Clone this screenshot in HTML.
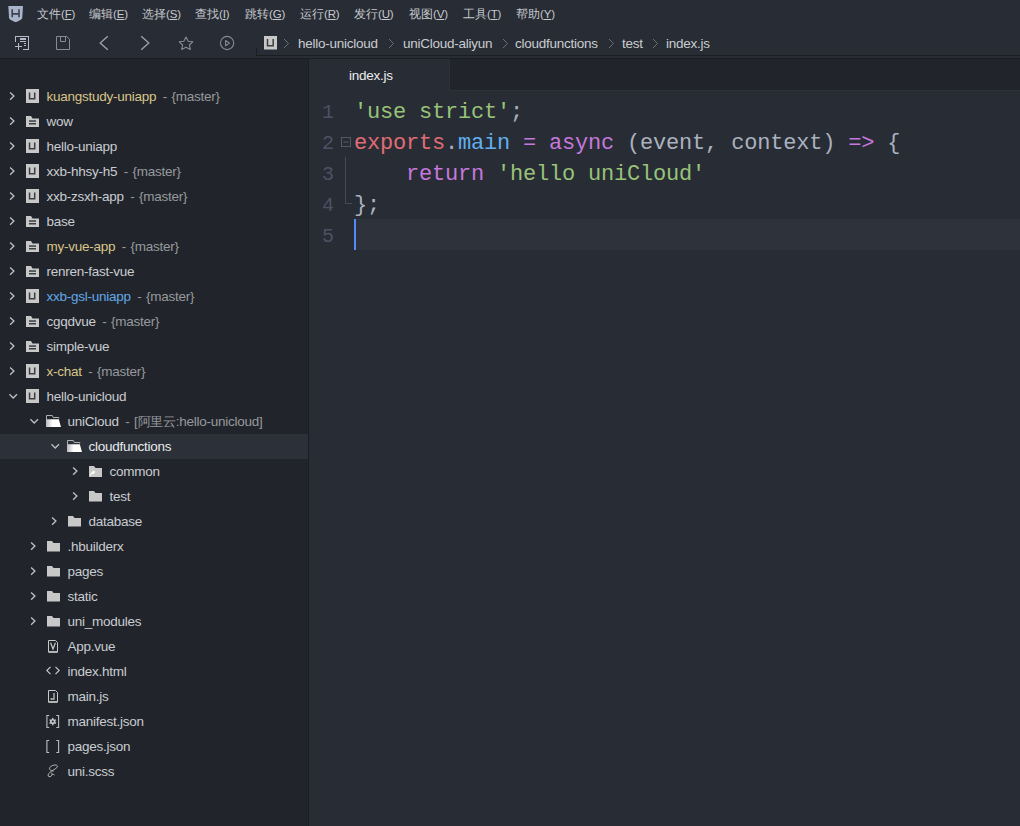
<!DOCTYPE html><html><head><meta charset="utf-8"><style>
*{margin:0;padding:0;box-sizing:border-box}
html,body{width:1020px;height:826px;overflow:hidden;background:#282c34;font-family:"Liberation Sans",sans-serif}
.abs{position:absolute}
.m{position:absolute;top:5px;font-size:12px;color:#c5c8ce;white-space:nowrap;line-height:18px}
.m u{text-decoration:underline;text-underline-offset:1px}
.t{position:absolute;font-size:13.5px;letter-spacing:-0.25px;line-height:16px;color:#c9ccd1;white-space:nowrap}
.g{color:#97999d}
.bc{position:absolute;top:36px;font-size:13.5px;letter-spacing:-0.25px;line-height:16px;color:#c9ccd1;white-space:nowrap}
.code{position:absolute;left:354px;font-family:"Liberation Mono",monospace;font-size:22px;letter-spacing:-0.2px;line-height:31px;white-space:pre;color:#abb2bf}
.ln{position:absolute;left:322px;font-family:"Liberation Mono",monospace;font-size:20px;line-height:31px;color:#4b5263}

</style></head><body>
<div class="abs" style="left:0;top:0;width:1020px;height:28px;background:#282c34"></div>
<svg class="abs" style="left:0;top:0" width="30" height="28" viewBox="0 0 30 28"><path d="M8.3 5.9 H23 L22.3 17.6 Q22.2 19 20.9 19.7 L16.5 21.9 Q15.65 22.3 14.8 21.9 L10.4 19.7 Q9.1 19 9 17.6 Z" fill="#a9b4c8"/><path d="M12.2 9.3 V17.2 M19 9.3 V17.2 M12.2 13.9 H19" stroke="#3b4150" stroke-width="1.6" fill="none"/></svg>
<div class="m" style="left:37px">文件<span style="letter-spacing:-0.2px;font-size:11.5px">(<u>F</u>)</span></div>
<div class="m" style="left:89px">编辑<span style="letter-spacing:-0.2px;font-size:11.5px">(<u>E</u>)</span></div>
<div class="m" style="left:142px">选择<span style="letter-spacing:-0.2px;font-size:11.5px">(<u>S</u>)</span></div>
<div class="m" style="left:195px">查找<span style="letter-spacing:-0.2px;font-size:11.5px">(<u>I</u>)</span></div>
<div class="m" style="left:245px">跳转<span style="letter-spacing:-0.2px;font-size:11.5px">(<u>G</u>)</span></div>
<div class="m" style="left:300px">运行<span style="letter-spacing:-0.2px;font-size:11.5px">(<u>R</u>)</span></div>
<div class="m" style="left:354px">发行<span style="letter-spacing:-0.2px;font-size:11.5px">(<u>U</u>)</span></div>
<div class="m" style="left:409px">视图<span style="letter-spacing:-0.2px;font-size:11.5px">(<u>V</u>)</span></div>
<div class="m" style="left:463px">工具<span style="letter-spacing:-0.2px;font-size:11.5px">(<u>T</u>)</span></div>
<div class="m" style="left:516px">帮助<span style="letter-spacing:-0.2px;font-size:11.5px">(<u>Y</u>)</span></div>
<div class="abs" style="left:0;top:28px;width:1020px;height:31px;background:#282c34;border-bottom:1px solid #1b1d22"></div>
<svg class="abs" style="left:0;top:28px" width="256" height="30" viewBox="0 28 256 30">
<g fill="#b4bbc8" shape-rendering="crispEdges">
<rect x="15" y="36" width="14" height="1"/><rect x="15" y="36" width="1" height="6"/><rect x="28" y="36" width="1" height="14"/><rect x="23" y="49" width="6" height="1"/>
<rect x="20" y="38" width="6" height="2"/><rect x="20" y="41" width="6" height="1"/><rect x="24" y="43" width="2" height="1"/><rect x="24" y="45" width="2" height="1"/>
<rect x="15" y="46" width="7" height="1"/><rect x="18" y="43" width="1" height="7"/>
</g>
<path d="M56.5 49.5 V36.5 H66.8 L69.5 39.2 V49.5 Z" fill="none" stroke="#868b96" stroke-width="1"/>
<path d="M60.5 36.5 V41.5 H65.5 V36.5" fill="none" stroke="#868b96" stroke-width="1"/>
<path d="M107.8 36.2 L100.2 43 L107.8 49.8" fill="none" stroke="#9ea3ae" stroke-width="1.3"/>
<path d="M141.2 36.2 L148.8 43 L141.2 49.8" fill="none" stroke="#9ea3ae" stroke-width="1.3"/>
<path d="M186 37 L188.2 41.2 L192.8 41.8 L189.4 45 L190.3 49.4 L186 47.3 L181.7 49.4 L182.6 45 L179.2 41.8 L183.8 41.2 Z" fill="none" stroke="#868b96" stroke-width="1.1" stroke-linejoin="round"/>
<circle cx="227.1" cy="43" r="6.6" fill="none" stroke="#868b96" stroke-width="1.1"/>
<path d="M225.6 40.5 V45.7 L229.5 43.1 Z" fill="none" stroke="#868b96" stroke-width="1.1" stroke-linejoin="round"/>
</svg>
<div class="abs" style="left:256px;top:48px;width:764px;height:8px;border-left:1px solid #1b1d22;border-bottom:1px solid #1b1d22"></div>
<svg class="abs" style="left:264px;top:36px" width="13" height="14" viewBox="0 0 13 14"><rect x="0" y="0" width="13" height="13.5" fill="#c8c8c8"/><path d="M3.5 3 V9.8 H9.2 V3" fill="none" stroke="#3a3d42" stroke-width="1.5"/></svg>
<svg class="abs" style="left:283px;top:38px" width="7" height="11" viewBox="0 0 7 11"><path d="M1 1 L5.5 5.5 L1 10" fill="none" stroke="#6d7077" stroke-width="1"/></svg>
<svg class="abs" style="left:388px;top:38px" width="7" height="11" viewBox="0 0 7 11"><path d="M1 1 L5.5 5.5 L1 10" fill="none" stroke="#6d7077" stroke-width="1"/></svg>
<svg class="abs" style="left:502px;top:38px" width="7" height="11" viewBox="0 0 7 11"><path d="M1 1 L5.5 5.5 L1 10" fill="none" stroke="#6d7077" stroke-width="1"/></svg>
<svg class="abs" style="left:608px;top:38px" width="7" height="11" viewBox="0 0 7 11"><path d="M1 1 L5.5 5.5 L1 10" fill="none" stroke="#6d7077" stroke-width="1"/></svg>
<svg class="abs" style="left:652px;top:38px" width="7" height="11" viewBox="0 0 7 11"><path d="M1 1 L5.5 5.5 L1 10" fill="none" stroke="#6d7077" stroke-width="1"/></svg>
<div class="bc" style="left:298px">hello-unicloud</div>
<div class="bc" style="left:403px">uniCloud-aliyun</div>
<div class="bc" style="left:515px">cloudfunctions</div>
<div class="bc" style="left:622px">test</div>
<div class="bc" style="left:666px">index.js</div>
<div class="abs" style="left:0;top:59px;width:308px;height:767px;background:#21252b"></div>
<div class="abs" style="left:308px;top:59px;width:1px;height:767px;background:#1b1d22"></div>
<svg class="abs" style="left:9px;top:91px" width="8" height="10" viewBox="0 0 8 10"><path d="M1.1 1.4 L4.9 5.1 L1.1 8.8" fill="none" stroke="#bcbfc4" stroke-width="1.35"/></svg>
<svg class="abs" style="left:26px;top:89px" width="14" height="14" viewBox="0 0 14 14"><rect x="0" y="0" width="13" height="14" fill="#c8c8c8"/><path d="M3.55 3.5 V9.7 H8.7 V3.5" fill="none" stroke="#3a3d42" stroke-width="1.5"/></svg>
<div class="t" style="left:46.5px;top:88.5px;color:#d8c48a">kuangstudy-uniapp<span class="g" style="margin-left:6.5px;word-spacing:1px">- {master}</span></div>
<svg class="abs" style="left:9px;top:116px" width="8" height="10" viewBox="0 0 8 10"><path d="M1.1 1.4 L4.9 5.1 L1.1 8.8" fill="none" stroke="#bcbfc4" stroke-width="1.35"/></svg>
<svg class="abs" style="left:26px;top:116px" width="14" height="12" viewBox="0 0 14 12"><path d="M0 0 H5 L6.5 2.5 H13 V11 H0 Z" fill="#c8c8c8"/><rect x="3" y="4.3" width="7" height="1.5" fill="#3a3d42"/><rect x="3" y="7" width="7" height="1.5" fill="#3a3d42"/></svg>
<div class="t" style="left:46.5px;top:113.5px;color:#c9ccd1">wow</div>
<svg class="abs" style="left:9px;top:141px" width="8" height="10" viewBox="0 0 8 10"><path d="M1.1 1.4 L4.9 5.1 L1.1 8.8" fill="none" stroke="#bcbfc4" stroke-width="1.35"/></svg>
<svg class="abs" style="left:26px;top:139px" width="14" height="14" viewBox="0 0 14 14"><rect x="0" y="0" width="13" height="14" fill="#c8c8c8"/><path d="M3.55 3.5 V9.7 H8.7 V3.5" fill="none" stroke="#3a3d42" stroke-width="1.5"/></svg>
<div class="t" style="left:46.5px;top:138.5px;color:#c9ccd1">hello-uniapp</div>
<svg class="abs" style="left:9px;top:166px" width="8" height="10" viewBox="0 0 8 10"><path d="M1.1 1.4 L4.9 5.1 L1.1 8.8" fill="none" stroke="#bcbfc4" stroke-width="1.35"/></svg>
<svg class="abs" style="left:26px;top:164px" width="14" height="14" viewBox="0 0 14 14"><rect x="0" y="0" width="13" height="14" fill="#c8c8c8"/><path d="M3.55 3.5 V9.7 H8.7 V3.5" fill="none" stroke="#3a3d42" stroke-width="1.5"/></svg>
<div class="t" style="left:46.5px;top:163.5px;color:#c9ccd1">xxb-hhsy-h5<span class="g" style="margin-left:6.5px;word-spacing:1px">- {master}</span></div>
<svg class="abs" style="left:9px;top:191px" width="8" height="10" viewBox="0 0 8 10"><path d="M1.1 1.4 L4.9 5.1 L1.1 8.8" fill="none" stroke="#bcbfc4" stroke-width="1.35"/></svg>
<svg class="abs" style="left:26px;top:189px" width="14" height="14" viewBox="0 0 14 14"><rect x="0" y="0" width="13" height="14" fill="#c8c8c8"/><path d="M3.55 3.5 V9.7 H8.7 V3.5" fill="none" stroke="#3a3d42" stroke-width="1.5"/></svg>
<div class="t" style="left:46.5px;top:188.5px;color:#c9ccd1">xxb-zsxh-app<span class="g" style="margin-left:6.5px;word-spacing:1px">- {master}</span></div>
<svg class="abs" style="left:9px;top:216px" width="8" height="10" viewBox="0 0 8 10"><path d="M1.1 1.4 L4.9 5.1 L1.1 8.8" fill="none" stroke="#bcbfc4" stroke-width="1.35"/></svg>
<svg class="abs" style="left:26px;top:216px" width="14" height="12" viewBox="0 0 14 12"><path d="M0 0 H5 L6.5 2.5 H13 V11 H0 Z" fill="#c8c8c8"/><rect x="3" y="4.3" width="7" height="1.5" fill="#3a3d42"/><rect x="3" y="7" width="7" height="1.5" fill="#3a3d42"/></svg>
<div class="t" style="left:46.5px;top:213.5px;color:#c9ccd1">base</div>
<svg class="abs" style="left:9px;top:241px" width="8" height="10" viewBox="0 0 8 10"><path d="M1.1 1.4 L4.9 5.1 L1.1 8.8" fill="none" stroke="#bcbfc4" stroke-width="1.35"/></svg>
<svg class="abs" style="left:26px;top:241px" width="14" height="12" viewBox="0 0 14 12"><path d="M0 0 H5 L6.5 2.5 H13 V11 H0 Z" fill="#c8c8c8"/><rect x="3" y="4.3" width="7" height="1.5" fill="#3a3d42"/><rect x="3" y="7" width="7" height="1.5" fill="#3a3d42"/></svg>
<div class="t" style="left:46.5px;top:238.5px;color:#d8c48a">my-vue-app<span class="g" style="margin-left:6.5px;word-spacing:1px">- {master}</span></div>
<svg class="abs" style="left:9px;top:266px" width="8" height="10" viewBox="0 0 8 10"><path d="M1.1 1.4 L4.9 5.1 L1.1 8.8" fill="none" stroke="#bcbfc4" stroke-width="1.35"/></svg>
<svg class="abs" style="left:26px;top:266px" width="14" height="12" viewBox="0 0 14 12"><path d="M0 0 H5 L6.5 2.5 H13 V11 H0 Z" fill="#c8c8c8"/><rect x="3" y="4.3" width="7" height="1.5" fill="#3a3d42"/><rect x="3" y="7" width="7" height="1.5" fill="#3a3d42"/></svg>
<div class="t" style="left:46.5px;top:263.5px;color:#c9ccd1">renren-fast-vue</div>
<svg class="abs" style="left:9px;top:291px" width="8" height="10" viewBox="0 0 8 10"><path d="M1.1 1.4 L4.9 5.1 L1.1 8.8" fill="none" stroke="#bcbfc4" stroke-width="1.35"/></svg>
<svg class="abs" style="left:26px;top:289px" width="14" height="14" viewBox="0 0 14 14"><rect x="0" y="0" width="13" height="14" fill="#c8c8c8"/><path d="M3.55 3.5 V9.7 H8.7 V3.5" fill="none" stroke="#3a3d42" stroke-width="1.5"/></svg>
<div class="t" style="left:46.5px;top:288.5px;color:#62a8e8">xxb-gsl-uniapp<span class="g" style="margin-left:6.5px;word-spacing:1px">- {master}</span></div>
<svg class="abs" style="left:9px;top:316px" width="8" height="10" viewBox="0 0 8 10"><path d="M1.1 1.4 L4.9 5.1 L1.1 8.8" fill="none" stroke="#bcbfc4" stroke-width="1.35"/></svg>
<svg class="abs" style="left:26px;top:316px" width="14" height="12" viewBox="0 0 14 12"><path d="M0 0 H5 L6.5 2.5 H13 V11 H0 Z" fill="#c8c8c8"/><rect x="3" y="4.3" width="7" height="1.5" fill="#3a3d42"/><rect x="3" y="7" width="7" height="1.5" fill="#3a3d42"/></svg>
<div class="t" style="left:46.5px;top:313.5px;color:#c9ccd1">cgqdvue<span class="g" style="margin-left:6.5px;word-spacing:1px">- {master}</span></div>
<svg class="abs" style="left:9px;top:341px" width="8" height="10" viewBox="0 0 8 10"><path d="M1.1 1.4 L4.9 5.1 L1.1 8.8" fill="none" stroke="#bcbfc4" stroke-width="1.35"/></svg>
<svg class="abs" style="left:26px;top:341px" width="14" height="12" viewBox="0 0 14 12"><path d="M0 0 H5 L6.5 2.5 H13 V11 H0 Z" fill="#c8c8c8"/><rect x="3" y="4.3" width="7" height="1.5" fill="#3a3d42"/><rect x="3" y="7" width="7" height="1.5" fill="#3a3d42"/></svg>
<div class="t" style="left:46.5px;top:338.5px;color:#c9ccd1">simple-vue</div>
<svg class="abs" style="left:9px;top:366px" width="8" height="10" viewBox="0 0 8 10"><path d="M1.1 1.4 L4.9 5.1 L1.1 8.8" fill="none" stroke="#bcbfc4" stroke-width="1.35"/></svg>
<svg class="abs" style="left:26px;top:364px" width="14" height="14" viewBox="0 0 14 14"><rect x="0" y="0" width="13" height="14" fill="#c8c8c8"/><path d="M3.55 3.5 V9.7 H8.7 V3.5" fill="none" stroke="#3a3d42" stroke-width="1.5"/></svg>
<div class="t" style="left:46.5px;top:363.5px;color:#d8c48a">x-chat<span class="g" style="margin-left:6.5px;word-spacing:1px">- {master}</span></div>
<svg class="abs" style="left:9px;top:393px" width="10" height="8" viewBox="0 0 10 8"><path d="M0.4 1.3 L4.2 5.1 L8 1.3" fill="none" stroke="#bcbfc4" stroke-width="1.35"/></svg>
<svg class="abs" style="left:26px;top:389px" width="14" height="14" viewBox="0 0 14 14"><rect x="0" y="0" width="13" height="14" fill="#c8c8c8"/><path d="M3.55 3.5 V9.7 H8.7 V3.5" fill="none" stroke="#3a3d42" stroke-width="1.5"/></svg>
<div class="t" style="left:46.5px;top:388.5px;color:#c9ccd1">hello-unicloud</div>
<svg class="abs" style="left:30px;top:418px" width="10" height="8" viewBox="0 0 10 8"><path d="M0.4 1.3 L4.2 5.1 L8 1.3" fill="none" stroke="#bcbfc4" stroke-width="1.35"/></svg>
<svg class="abs" style="left:46px;top:415px" width="16" height="13" viewBox="0 0 16 13"><defs><linearGradient id="fg" x1="0" x2="1" y1="0" y2="0"><stop offset="0" stop-color="#b8b8b8"/><stop offset="0.45" stop-color="#ffffff"/></linearGradient></defs><path d="M0.5 6 V0.5 H6.3 L7.2 2.5 H12.8 V3.5" fill="none" stroke="#b0b0b0" stroke-width="1"/><path d="M0 4.2 H12.8 L15 11.9 H0 Z" fill="url(#fg)"/></svg>
<div class="t" style="left:67.5px;top:413.5px;color:#c9ccd1">uniCloud<span class="g" style="margin-left:6.5px;word-spacing:1px">- [<span style="font-size:12.5px;letter-spacing:-0.3px">阿里云</span>:hello-unicloud]</span></div>
<div class="abs" style="left:0;top:434px;width:308px;height:25px;background:#2c3038"></div>
<svg class="abs" style="left:51px;top:443px" width="10" height="8" viewBox="0 0 10 8"><path d="M0.4 1.3 L4.2 5.1 L8 1.3" fill="none" stroke="#bcbfc4" stroke-width="1.35"/></svg>
<svg class="abs" style="left:67px;top:440px" width="16" height="13" viewBox="0 0 16 13"><defs><linearGradient id="fg" x1="0" x2="1" y1="0" y2="0"><stop offset="0" stop-color="#b8b8b8"/><stop offset="0.45" stop-color="#ffffff"/></linearGradient></defs><path d="M0.5 6 V0.5 H6.3 L7.2 2.5 H12.8 V3.5" fill="none" stroke="#b0b0b0" stroke-width="1"/><path d="M0 4.2 H12.8 L15 11.9 H0 Z" fill="url(#fg)"/></svg>
<div class="t" style="left:88.5px;top:438.5px;color:#e8eaed">cloudfunctions</div>
<svg class="abs" style="left:72px;top:466px" width="8" height="10" viewBox="0 0 8 10"><path d="M1.1 1.4 L4.9 5.1 L1.1 8.8" fill="none" stroke="#bcbfc4" stroke-width="1.35"/></svg>
<svg class="abs" style="left:89px;top:466px" width="14" height="12" viewBox="0 0 14 12"><path d="M0 0 H5 L6.5 2 H13 V11 H0 Z" fill="#c8c8c8"/><path d="M1.5 9.5 Q2 6.5 5 6 M3.5 5 L5.5 6 L4 7.8" fill="none" stroke="#fff" stroke-width="1.2"/></svg>
<div class="t" style="left:109.5px;top:463.5px;color:#c9ccd1">common</div>
<svg class="abs" style="left:72px;top:491px" width="8" height="10" viewBox="0 0 8 10"><path d="M1.1 1.4 L4.9 5.1 L1.1 8.8" fill="none" stroke="#bcbfc4" stroke-width="1.35"/></svg>
<svg class="abs" style="left:89px;top:491px" width="14" height="12" viewBox="0 0 14 12"><path d="M0 0 H5 L6.5 2 H13 V10.5 H0 Z" fill="#c8c8c8"/></svg>
<div class="t" style="left:109.5px;top:488.5px;color:#c9ccd1">test</div>
<svg class="abs" style="left:51px;top:516px" width="8" height="10" viewBox="0 0 8 10"><path d="M1.1 1.4 L4.9 5.1 L1.1 8.8" fill="none" stroke="#bcbfc4" stroke-width="1.35"/></svg>
<svg class="abs" style="left:68px;top:516px" width="14" height="12" viewBox="0 0 14 12"><path d="M0 0 H5 L6.5 2 H13 V10.5 H0 Z" fill="#c8c8c8"/></svg>
<div class="t" style="left:88.5px;top:513.5px;color:#c9ccd1">database</div>
<svg class="abs" style="left:30px;top:541px" width="8" height="10" viewBox="0 0 8 10"><path d="M1.1 1.4 L4.9 5.1 L1.1 8.8" fill="none" stroke="#bcbfc4" stroke-width="1.35"/></svg>
<svg class="abs" style="left:47px;top:541px" width="14" height="12" viewBox="0 0 14 12"><path d="M0 0 H5 L6.5 2 H13 V10.5 H0 Z" fill="#c8c8c8"/></svg>
<div class="t" style="left:67.5px;top:538.5px;color:#c9ccd1">.hbuilderx</div>
<svg class="abs" style="left:30px;top:566px" width="8" height="10" viewBox="0 0 8 10"><path d="M1.1 1.4 L4.9 5.1 L1.1 8.8" fill="none" stroke="#bcbfc4" stroke-width="1.35"/></svg>
<svg class="abs" style="left:47px;top:566px" width="14" height="12" viewBox="0 0 14 12"><path d="M0 0 H5 L6.5 2 H13 V10.5 H0 Z" fill="#c8c8c8"/></svg>
<div class="t" style="left:67.5px;top:563.5px;color:#c9ccd1">pages</div>
<svg class="abs" style="left:30px;top:591px" width="8" height="10" viewBox="0 0 8 10"><path d="M1.1 1.4 L4.9 5.1 L1.1 8.8" fill="none" stroke="#bcbfc4" stroke-width="1.35"/></svg>
<svg class="abs" style="left:47px;top:591px" width="14" height="12" viewBox="0 0 14 12"><path d="M0 0 H5 L6.5 2 H13 V10.5 H0 Z" fill="#c8c8c8"/></svg>
<div class="t" style="left:67.5px;top:588.5px;color:#c9ccd1">static</div>
<svg class="abs" style="left:30px;top:616px" width="8" height="10" viewBox="0 0 8 10"><path d="M1.1 1.4 L4.9 5.1 L1.1 8.8" fill="none" stroke="#bcbfc4" stroke-width="1.35"/></svg>
<svg class="abs" style="left:47px;top:616px" width="14" height="12" viewBox="0 0 14 12"><path d="M0 0 H5 L6.5 2 H13 V10.5 H0 Z" fill="#c8c8c8"/></svg>
<div class="t" style="left:67.5px;top:613.5px;color:#c9ccd1">uni_modules</div>
<svg class="abs" style="left:48px;top:640px" width="12" height="14" viewBox="0 0 12 14"><path d="M0.5 0.5 H7.5 L9.5 2.5 V12 H0.5 Z" fill="none" stroke="#c8c8c8" stroke-width="1"/><path d="M0.5 12 H9.5" stroke="#c8c8c8" stroke-width="1.5"/><path d="M2.6 2.8 L5 9 L7.4 2.8" fill="none" stroke="#c8c8c8" stroke-width="1.2"/></svg>
<div class="t" style="left:67.5px;top:638.5px;color:#c9ccd1">App.vue</div>
<svg class="abs" style="left:46px;top:666px" width="14" height="10" viewBox="0 0 14 10"><path d="M4.5 0.8 L0.8 4.5 L4.5 8.2 M9.5 0.8 L13.2 4.5 L9.5 8.2" fill="none" stroke="#c8c8c8" stroke-width="1.2"/></svg>
<div class="t" style="left:67.5px;top:663.5px;color:#c9ccd1">index.html</div>
<svg class="abs" style="left:48px;top:690px" width="12" height="14" viewBox="0 0 12 14"><path d="M0.5 0.5 H7.5 L9.5 2.5 V12 H0.5 Z" fill="none" stroke="#c8c8c8" stroke-width="1"/><path d="M0.5 12 H9.5" stroke="#c8c8c8" stroke-width="1.5"/><path d="M6 3 V9.2 H3.2 V8" fill="none" stroke="#c8c8c8" stroke-width="1.2"/></svg>
<div class="t" style="left:67.5px;top:688.5px;color:#c9ccd1">main.js</div>
<svg class="abs" style="left:46px;top:715px" width="14" height="14" viewBox="0 0 14 14"><path d="M3.2 0.5 H0.9 V12.5 H3.2 M10.3 0.5 H12.6 V12.5 H10.3" fill="none" stroke="#bdbdbd" stroke-width="1.1"/><rect x="6.05" y="2.9" width="1.4" height="7.4" fill="#c4c4c4" transform="rotate(0 6.75 6.6)"/><rect x="6.05" y="2.9" width="1.4" height="7.4" fill="#c4c4c4" transform="rotate(60 6.75 6.6)"/><rect x="6.05" y="2.9" width="1.4" height="7.4" fill="#c4c4c4" transform="rotate(120 6.75 6.6)"/><circle cx="6.75" cy="6.6" r="2.7" fill="#c4c4c4"/><circle cx="6.75" cy="6.6" r="1" fill="#21242a"/></svg>
<div class="t" style="left:67.5px;top:713.5px;color:#c9ccd1">manifest.json</div>
<svg class="abs" style="left:46px;top:740px" width="14" height="14" viewBox="0 0 14 14"><path d="M3.2 0.5 H0.9 V12.5 H3.2 M10.3 0.5 H12.6 V12.5 H10.3" fill="none" stroke="#bdbdbd" stroke-width="1.1"/></svg>
<div class="t" style="left:67.5px;top:738.5px;color:#c9ccd1">pages.json</div>
<svg class="abs" style="left:47px;top:764px" width="12" height="14" viewBox="0 0 12 14"><path d="M6.5 7.2 C3 6.8 1.2 4.6 3.6 2.6 C6 0.6 10.6 0.4 10.4 2.4 C10.2 4.4 6.6 5.6 4.6 7 C2.6 8.4 0.6 10.4 1.2 12 C1.8 13.4 4.2 12.8 4.8 11.2 C5.2 10 4.8 9.2 4.4 8.6 M4.9 10.6 C6 10.2 7.2 10.4 7.6 11" fill="none" stroke="#c4c4c4" stroke-width="0.9"/></svg>
<div class="t" style="left:67.5px;top:763.5px;color:#c9ccd1">uni.scss</div>
<div class="abs" style="left:309px;top:59px;width:711px;height:767px;background:#282c34"></div>
<div class="abs" style="left:449px;top:59px;width:571px;height:32px;background:#21252b;border-left:1px solid #2d3139;border-bottom:1px solid #2d3139"></div>
<div class="abs" style="left:349px;top:68px;font-size:13.5px;letter-spacing:-0.25px;line-height:16px;color:#eceef0">index.js</div>
<div class="abs" style="left:356px;top:219px;width:664px;height:31px;background:#2e323b"></div>
<div class="abs" style="left:354px;top:219px;width:2px;height:31px;background:#528bff"></div>
<div class="ln" style="top:97px">1</div>
<div class="ln" style="top:128px">2</div>
<div class="ln" style="top:159px">3</div>
<div class="ln" style="top:190px">4</div>
<div class="ln" style="top:221px">5</div>
<div class="code" style="top:97px"><span style="color:#98c379">'use strict'</span>;</div>
<div class="code" style="top:128px"><span style="color:#e06c75">exports</span>.<span style="color:#61afef">main</span> <span style="color:#c678dd">=</span> <span style="color:#c678dd">async</span> (event, context) <span style="color:#c678dd">=&gt;</span> {</div>
<div class="code" style="top:159px">    <span style="color:#c678dd">return</span> <span style="color:#98c379">'hello uniCloud'</span></div>
<div class="code" style="top:190px">};</div>
<div class="code" style="top:221px"></div>
<svg class="abs" style="left:340px;top:136px" width="14" height="70" viewBox="0 0 14 70"><rect x="1.5" y="1.5" width="9" height="9" fill="none" stroke="#555a66" stroke-width="1"/><path d="M3.5 6 H8.5" stroke="#555a66" stroke-width="1"/><path d="M5.5 21 V67.5 H12" fill="none" stroke="#474b54" stroke-width="1"/></svg>
</body></html>
